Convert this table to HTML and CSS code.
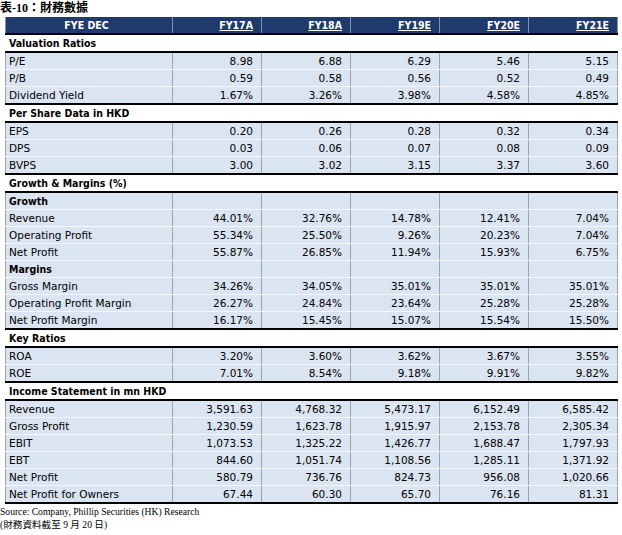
FILE: index.html
```html
<!DOCTYPE html>
<html>
<head>
<meta charset="utf-8">
<link rel="stylesheet" href="styles.css">
</head>
<body>
<div class="title">表-10：財務數據</div>
<table class="fin">
<colgroup><col class="c-label"><col class="c-num"><col class="c-num"><col class="c-num"><col class="c-num"><col class="c-num"></colgroup>
<thead>
<tr class="head"><th class="lbl">FYE DEC</th><th><u>FY17A</u></th><th><u>FY18A</u></th><th><u>FY19E</u></th><th><u>FY20E</u></th><th><u>FY21E</u></th></tr>
</thead>
<tbody>
<tr class="sec"><td colspan="6">Valuation Ratios</td></tr>
<tr><td>P/E</td><td>8.98</td><td>6.88</td><td>6.29</td><td>5.46</td><td>5.15</td></tr>
<tr><td>P/B</td><td>0.59</td><td>0.58</td><td>0.56</td><td>0.52</td><td>0.49</td></tr>
<tr><td>Dividend Yield</td><td>1.67%</td><td>3.26%</td><td>3.98%</td><td>4.58%</td><td>4.85%</td></tr>
<tr class="sec"><td colspan="6">Per Share Data in HKD</td></tr>
<tr><td>EPS</td><td>0.20</td><td>0.26</td><td>0.28</td><td>0.32</td><td>0.34</td></tr>
<tr><td>DPS</td><td>0.03</td><td>0.06</td><td>0.07</td><td>0.08</td><td>0.09</td></tr>
<tr><td>BVPS</td><td>3.00</td><td>3.02</td><td>3.15</td><td>3.37</td><td>3.60</td></tr>
<tr class="sec"><td colspan="6">Growth &amp; Margins (%)</td></tr>
<tr class="sub"><td>Growth</td><td></td><td></td><td></td><td></td><td></td></tr>
<tr><td>Revenue</td><td>44.01%</td><td>32.76%</td><td>14.78%</td><td>12.41%</td><td>7.04%</td></tr>
<tr><td>Operating Profit</td><td>55.34%</td><td>25.50%</td><td>9.26%</td><td>20.23%</td><td>7.04%</td></tr>
<tr><td>Net Profit</td><td>55.87%</td><td>26.85%</td><td>11.94%</td><td>15.93%</td><td>6.75%</td></tr>
<tr class="sub"><td>Margins</td><td></td><td></td><td></td><td></td><td></td></tr>
<tr><td>Gross Margin</td><td>34.26%</td><td>34.05%</td><td>35.01%</td><td>35.01%</td><td>35.01%</td></tr>
<tr><td>Operating Profit Margin</td><td>26.27%</td><td>24.84%</td><td>23.64%</td><td>25.28%</td><td>25.28%</td></tr>
<tr><td>Net Profit Margin</td><td>16.17%</td><td>15.45%</td><td>15.07%</td><td>15.54%</td><td>15.50%</td></tr>
<tr class="sec"><td colspan="6">Key Ratios</td></tr>
<tr><td>ROA</td><td>3.20%</td><td>3.60%</td><td>3.62%</td><td>3.67%</td><td>3.55%</td></tr>
<tr><td>ROE</td><td>7.01%</td><td>8.54%</td><td>9.18%</td><td>9.91%</td><td>9.82%</td></tr>
<tr class="sec"><td colspan="6">Income Statement in mn HKD</td></tr>
<tr><td>Revenue</td><td>3,591.63</td><td>4,768.32</td><td>5,473.17</td><td>6,152.49</td><td>6,585.42</td></tr>
<tr><td>Gross Profit</td><td>1,230.59</td><td>1,623.78</td><td>1,915.97</td><td>2,153.78</td><td>2,305.34</td></tr>
<tr><td>EBIT</td><td>1,073.53</td><td>1,325.22</td><td>1,426.77</td><td>1,688.47</td><td>1,797.93</td></tr>
<tr><td>EBT</td><td>844.60</td><td>1,051.74</td><td>1,108.56</td><td>1,285.11</td><td>1,371.92</td></tr>
<tr><td>Net Profit</td><td>580.79</td><td>736.76</td><td>824.73</td><td>956.08</td><td>1,020.66</td></tr>
<tr class="last"><td>Net Profit for Owners</td><td>67.44</td><td>60.30</td><td>65.70</td><td>76.16</td><td>81.31</td></tr>
</tbody>
</table>
<div class="source">Source: Company, Phillip Securities (HK) Research</div>
<div class="note">(財務資料截至 9 月 20 日)</div>
</body>
</html>
```

FILE: styles.css
```css
html, body {
  margin: 0;
  padding: 0;
  background: #ffffff;
}
body {
  font-family: "DejaVu Sans", "Noto Sans CJK TC", sans-serif;
  color: #000;
}
.title {
  font-family: "Liberation Serif", "Noto Sans CJK TC", serif;
  font-weight: bold;
  font-size: 12px;
  line-height: 14px;
  height: 17px;
  padding-top: 1px;
  box-sizing: border-box;
}
.fin {
  margin: 0 0 0 5px;
  border-collapse: collapse;
  width: 612px;
  table-layout: fixed;
  font-size: 10.5px;
}
.c-label { width: 167px; }
.c-num { width: 89px; }
.fin td, .fin th {
  height: 16px;
  padding: 0 8px 0 3px;
  line-height: 16px;
  white-space: nowrap;
  overflow: hidden;
}
.fin td {
  background: #dbe4f1;
  text-align: right;
  border-top: 1px solid #f4f6fa;
  border-bottom: 1px solid #f4f6fa;
  border-left: 1px solid #9aa3b2;
  border-right: 1px solid #9aa3b2;
}
.fin td:first-child {
  text-align: left;
}
.head th {
  background: #1f3a6c;
  color: #ffffff;
  font-family: "DejaVu Sans Condensed", "DejaVu Sans", sans-serif;
  font-weight: bold;
  font-size: 10.5px;
  text-align: right;
  border-left: 1px solid #8391ad;
  border-right: 1px solid #8391ad;
  border-bottom: 2px solid #000;
}
.head th.lbl {
  text-align: center;
}
.fin tr.sec td {
  background: #ffffff;
  font-family: "DejaVu Sans Condensed", "DejaVu Sans", sans-serif;
  font-weight: bold;
  font-size: 10.5px;
  text-align: left;
  border-top: 2px solid #000;
  border-bottom: 2px solid #000;
  border-left: 1px solid #ffffff;
  border-right: 1px solid #ffffff;
}
.fin tr.sub td:first-child {
  font-family: "DejaVu Sans Condensed", "DejaVu Sans", sans-serif;
  font-weight: bold;
  font-size: 10.5px;
}
.fin tr.last td {
  border-bottom: 2px solid #000;
}
.source {
  font-family: "Liberation Serif", serif;
  font-size: 9.6px;
  line-height: 12px;
  margin-top: 2px;
}
.note {
  font-family: "Liberation Serif", "Noto Sans CJK TC", serif;
  font-size: 9.6px;
  line-height: 13px;
}
```
